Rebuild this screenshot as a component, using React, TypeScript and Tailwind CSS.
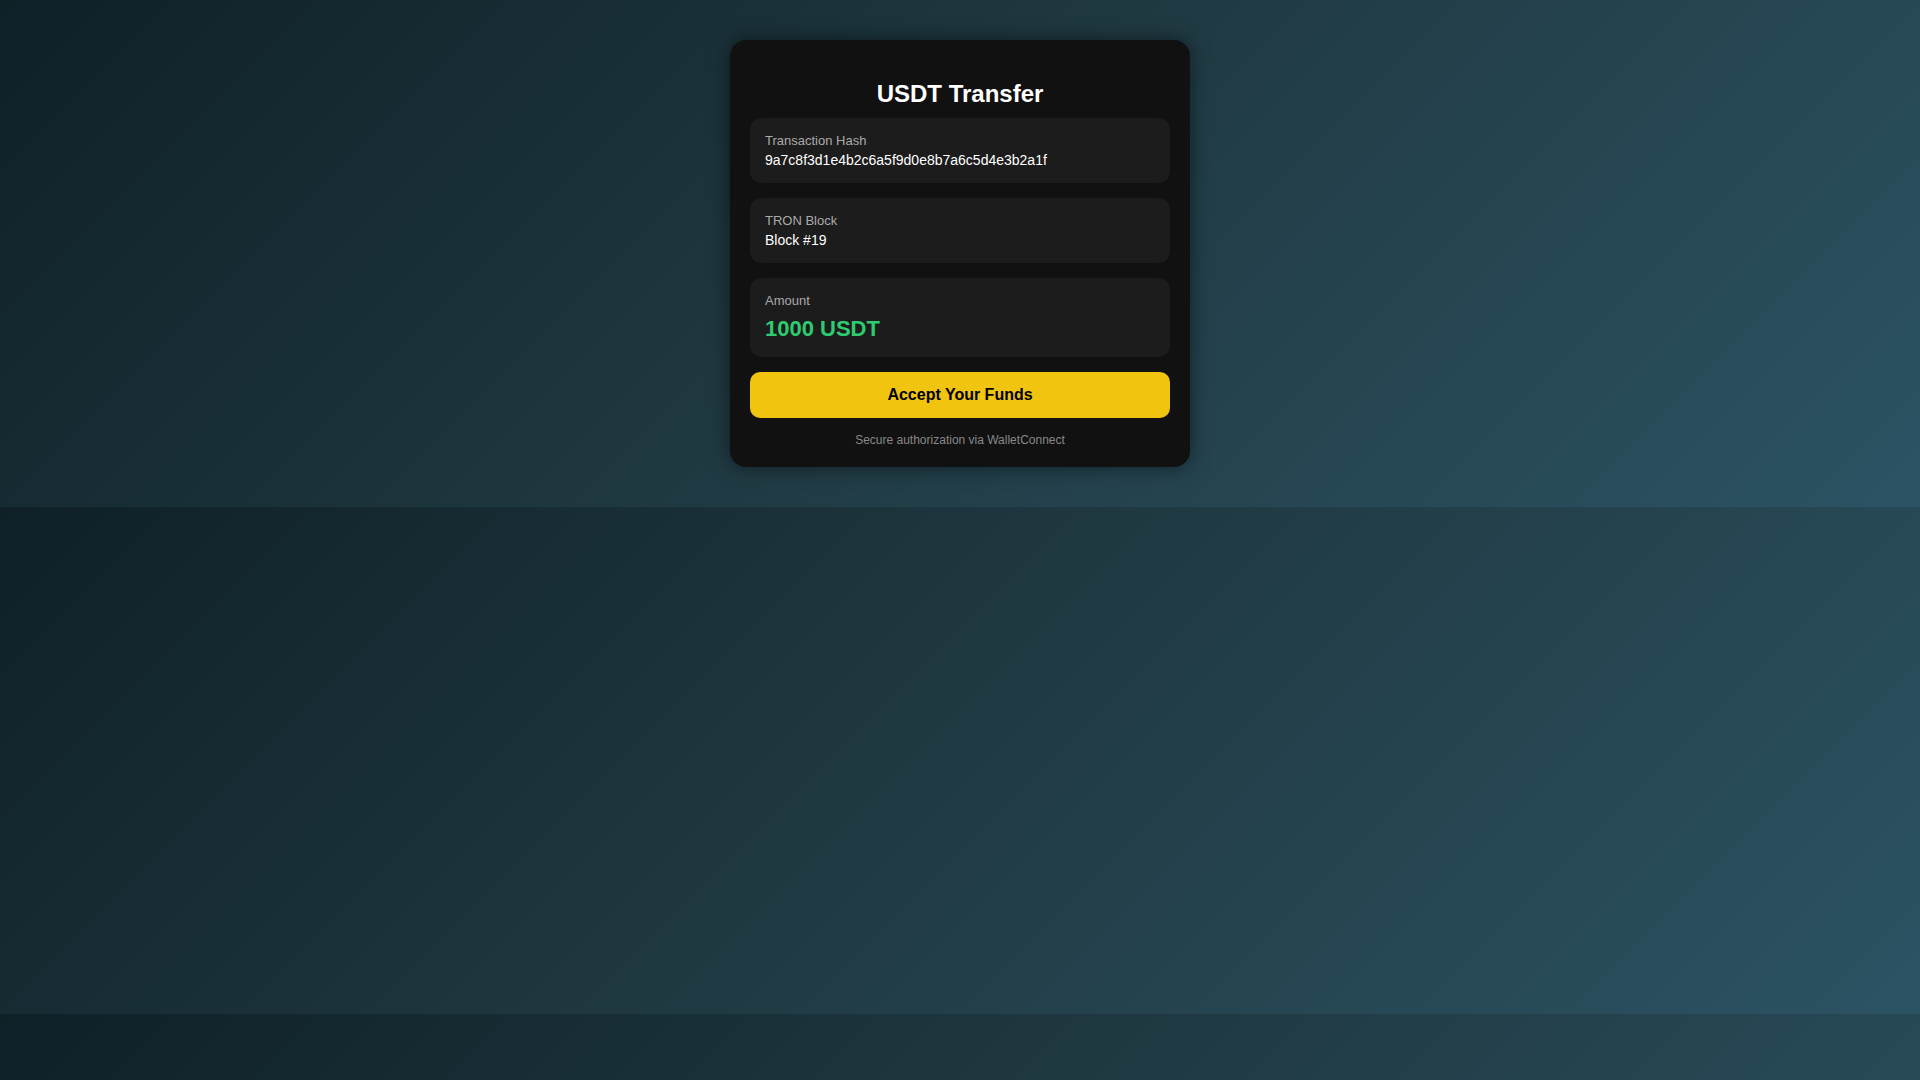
export default function App() {
  return (
    <div
      className="min-h-screen w-full bg-[linear-gradient(135deg,#0f2027,#203a43,#2c5364)] bg-[length:100%_507px] bg-repeat p-[40px]"
      style={{ fontFamily: '"Liberation Sans", Arial, sans-serif' }}
    >
      <div className="mx-auto w-[460px] rounded-[16px] bg-[#111111] px-[20px] pb-[20px] pt-[20px] shadow-[0_0_20px_rgba(0,0,0,0.5)]">
        <h2 className="mb-[10px] mt-[20px] text-center text-[24px] font-bold leading-[28px] text-white">
          USDT Transfer
        </h2>
        <div className="mb-[15px] rounded-[12px] bg-[#1c1c1c] p-[15px]">
          <div className="text-[13px] leading-[15px] text-[#aaaaaa]">Transaction Hash</div>
          <div className="mt-[4px] text-[14px] leading-[16px] text-white">
            9a7c8f3d1e4b2c6a5f9d0e8b7a6c5d4e3b2a1f
          </div>
        </div>
        <div className="mb-[15px] rounded-[12px] bg-[#1c1c1c] p-[15px]">
          <div className="text-[13px] leading-[15px] text-[#aaaaaa]">TRON Block</div>
          <div className="mt-[4px] text-[14px] leading-[16px] text-white">Block #19</div>
        </div>
        <div className="mb-[15px] rounded-[12px] bg-[#1c1c1c] p-[15px]">
          <div className="text-[13px] leading-[15px] text-[#aaaaaa]">Amount</div>
          <div className="mt-[7px] text-[22px] font-bold leading-[27px] text-[#2ecc71]">1000 USDT</div>
        </div>
        <button className="block h-[46px] w-full rounded-[10px] bg-[#f0c40f] text-[16px] font-bold text-black">
          Accept Your Funds
        </button>
        <div className="mt-[15px] text-center text-[12px] leading-[14px] text-[#888888]">
          Secure authorization via WalletConnect
        </div>
      </div>
    </div>
  );
}
